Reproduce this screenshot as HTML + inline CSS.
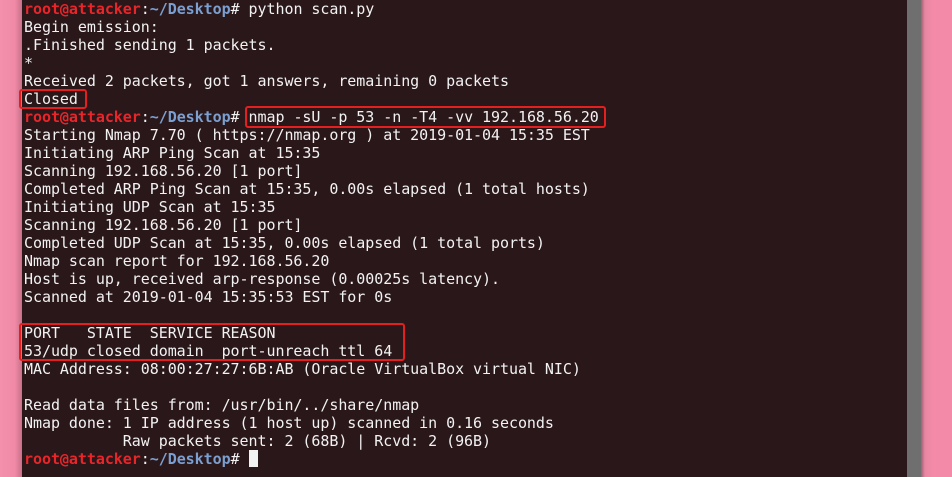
<!DOCTYPE html><html><head><style>
body{margin:0;width:952px;height:477px;overflow:hidden;background:#f38aa8;position:relative}
#l{position:absolute;left:0;top:0;width:22px;height:477px;background:linear-gradient(90deg,#f490ac 0,#f08aa6 15px,#c87088 22px)}
#t{position:absolute;left:22px;top:0;width:885px;height:477px;background:#2a171a}
#sb{position:absolute;left:907px;top:0;width:14px;height:477px;background:#6f6f6f}
#r{position:absolute;left:921px;top:0;width:31px;height:477px;background:linear-gradient(90deg,#a06070 0,#e886a2 4px,#f38aa8 12px)}
pre{position:absolute;left:24px;top:0;margin:0;font:15px/18px "DejaVu Sans Mono","Liberation Mono",monospace;letter-spacing:-0.05px;color:#f2f2f2}
.p{color:#e8262a;font-weight:bold}.d{color:#7b9fd0;font-weight:bold}
.b{position:absolute;border:2.5px solid #e41f1f;border-radius:3px;box-sizing:border-box}
.c{background:#f2f2f2;display:inline-block;width:9px;height:17px;vertical-align:-3px}
</style></head><body>
<div id="l"></div><div id="t"></div><div id="sb"></div><div id="r"></div>
<pre><span class="p">root@attacker</span>:<span class="d">~/Desktop</span># python scan.py
Begin emission:
.Finished sending 1 packets.
*
Received 2 packets, got 1 answers, remaining 0 packets
Closed
<span class="p">root@attacker</span>:<span class="d">~/Desktop</span># nmap -sU -p 53 -n -T4 -vv 192.168.56.20
Starting Nmap 7.70 ( https://nmap.org ) at 2019-01-04 15:35 EST
Initiating ARP Ping Scan at 15:35
Scanning 192.168.56.20 [1 port]
Completed ARP Ping Scan at 15:35, 0.00s elapsed (1 total hosts)
Initiating UDP Scan at 15:35
Scanning 192.168.56.20 [1 port]
Completed UDP Scan at 15:35, 0.00s elapsed (1 total ports)
Nmap scan report for 192.168.56.20
Host is up, received arp-response (0.00025s latency).
Scanned at 2019-01-04 15:35:53 EST for 0s

PORT   STATE  SERVICE REASON
53/udp closed domain  port-unreach ttl 64
MAC Address: 08:00:27:27:6B:AB (Oracle VirtualBox virtual NIC)

Read data files from: /usr/bin/../share/nmap
Nmap done: 1 IP address (1 host up) scanned in 0.16 seconds
           Raw packets sent: 2 (68B) | Rcvd: 2 (96B)
<span class="p">root@attacker</span>:<span class="d">~/Desktop</span># <span class="c"></span></pre>
<div class="b" style="left:19px;top:89px;width:68px;height:20px"></div>
<div class="b" style="left:245px;top:106px;width:361px;height:22px"></div>
<div class="b" style="left:19px;top:323px;width:386px;height:38px"></div>
</body></html>
